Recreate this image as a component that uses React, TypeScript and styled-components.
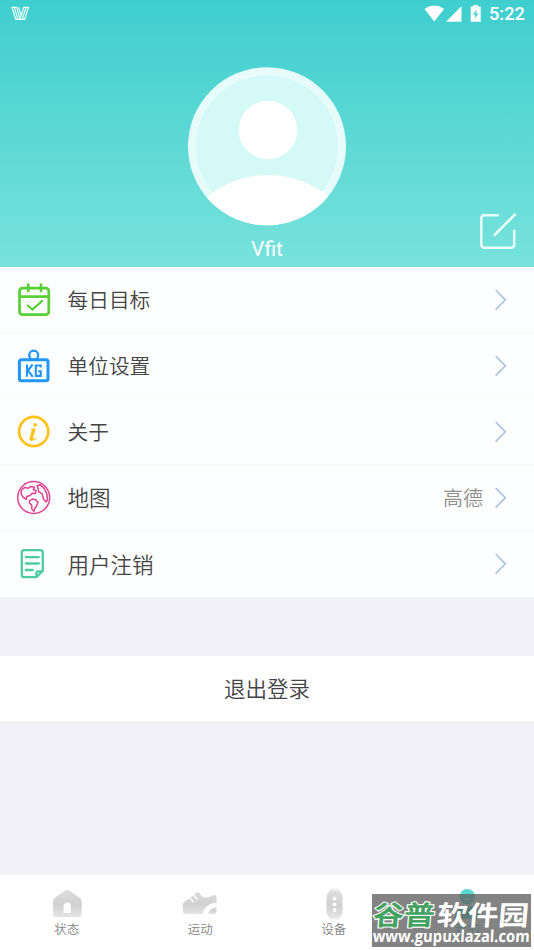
import React from "react";
import styled, { createGlobalStyle } from "styled-components";

const cjk = `"Noto Sans CJK SC", sans-serif`;

const GlobalStyle = createGlobalStyle`
  * { box-sizing: border-box; }
  body { margin: 0; background: #f2f1f8; font-family: ${cjk}; }
  svg { display: block; }
`;

const Screen = styled.main`
  position: relative;
  width: 534px;
  height: 950px;
  display: flex;
  flex-direction: column;
  overflow: hidden;
  background: #f2f1f8;
`;

const Header = styled.header`
  position: relative;
  height: 267px;
  flex: none;
  display: flex;
  flex-direction: column;
  align-items: center;
  background: linear-gradient(#3fcece, #78e2dc);
`;

const StatusBar = styled.div`
  width: 100%;
  height: 27px;
  flex: none;
  display: flex;
  align-items: center;
  justify-content: space-between;
  padding: 0 9px 0 11px;
`;

const StatusIcons = styled.div`
  display: flex;
  align-items: center;
`;

const Clock = styled.span`
  margin-left: 7px;
  width: 36px;
  font: 500 18.2px/27px Roboto, sans-serif;
  color: #fff;
`;

const Avatar = styled.svg`
  margin-top: 40px;
  flex: none;
`;

const UserName = styled.div`
  margin-top: 10px;
  font: 400 21px/27px Roboto, sans-serif;
  color: #fff;
`;

const EditButton = styled.button`
  position: absolute;
  right: 18px;
  top: 212px;
  padding: 0;
  border: 0;
  background: none;
`;

const Menu = styled.section`
  height: 330px;
  flex: none;
  display: flex;
  flex-direction: column;
  background: #fdfefe;
`;

const Row = styled.div`
  height: 66px;
  display: flex;
  align-items: center;
  padding: 0 27px 0 16px;
  border-bottom: 1px solid #f6f9fa;
  &:last-child { border-bottom: 0; }
`;

const RowLabel = styled.span<{ $size: number }>`
  flex: 1;
  margin: 0 0 1px 15.5px;
  font-size: ${(p) => p.$size}px;
  font-weight: 350;
  line-height: 30px;
  color: #444;
`;

const RowValue = styled.span`
  margin-right: 11px;
  font-size: 20px;
  font-weight: 350;
  line-height: 30px;
  color: #8f8f8f;
`;

const Logout = styled.button`
  margin: 59px 0 0;
  height: 65px;
  flex: none;
  padding: 0 0 2px;
  border: 0;
  background: #fff;
  font: 350 21.5px/63px ${cjk};
  color: #444;
`;

const NavBar = styled.nav`
  margin-top: auto;
  height: 75px;
  flex: none;
  display: grid;
  grid-template-columns: repeat(4, 1fr);
  background: #fff;
`;

const NavItem = styled.div<{ $active?: boolean }>`
  display: flex;
  flex-direction: column;
  align-items: center;
  padding-top: 13px;
  font-size: 12.5px;
  font-weight: 350;
  line-height: 18px;
  color: ${(p) => (p.$active ? "#46d0cf" : "#858585")};
  svg { margin-bottom: -2px; flex: none; }
`;

const Watermark = styled.svg`
  position: absolute;
  left: 372px;
  top: 894px;
`;

const CalendarIcon = () => (
  <svg width="36" height="36" viewBox="0 0 36 36" fill="none" stroke="#58d038" strokeWidth="2.7" strokeLinecap="round" strokeLinejoin="round">
    <rect x="3.5" y="6.2" width="29.3" height="26.5" rx="3" />
    <path d="M3.5 14.6H32.8M12.3 2.7V9M25 2.7V9" />
    <path d="M11.8 23.4l4.5 4.2 10-8.7" strokeWidth="2.1" />
  </svg>
);

const WeightIcon = () => (
  <svg width="36" height="36" viewBox="0 0 36 36" fill="none" stroke="#2196fb">
    <circle cx="17.7" cy="7.2" r="4.5" strokeWidth="2.3" />
    <rect x="3.4" y="11.7" width="28.6" height="21" rx="2" strokeWidth="3" />
    <path strokeWidth="2.1" d="M11 16.5v12.3M16.6 16.5 12 22.6l4.8 6.2M24.8 19.5v-2h-5v10.4h5v-4.6h-2.6" />
  </svg>
);

const InfoIcon = () => (
  <svg width="36" height="36" viewBox="0 0 36 36" fill="none">
    <circle cx="17.7" cy="17.5" r="14.6" stroke="#ffc21a" strokeWidth="2.7" />
    <circle cx="19.2" cy="10.8" r="1.9" fill="#ffc21a" />
    <path d="M14.4 14.4h5.4l-2.6 9.3c-.4 1.500.3 1.600 2.700 0l.5.8c-2.400 1.900-4.300 2.700-5.700 2.300-1.200-.3-1.400-1.500-.9-3.300l2.100-7.800-1.500-.5Z" fill="#ffc21a" />
  </svg>
);

const GlobeIcon = () => (
  <svg width="36" height="36" viewBox="0 0 36 36" fill="none" stroke="#de4291" strokeWidth="1.5" strokeLinejoin="round">
    <circle cx="17.7" cy="17.5" r="16" />
    <path d="M5.200 10.500 8.600 7.400l3.900.8 1.800-1.600 4.200.6-1.200 2.300 2.700 1-.6 3-3.200-.2-2.200 2.300-3.200.8-.5 2.900-3.500-2.300-1.600-3.400Z" />
    <path d="M21 6 23.800 4.700l4 3.200 3 5.700.7 5.800-1.200 2.600-2.700-2.800-1.300-5-3.700-2.500-.3-2.800Z" />
    <path d="m13.500 20.800 2.700-1.800 3.600.8 2.200 2.500-1.500 3.700-1.600 2.200-1 3-2-2-.2-4.100-2.200-2.200Z" />
  </svg>
);

const DocumentIcon = () => (
  <svg width="36" height="36" viewBox="0 0 36 36" fill="none" stroke="#4bcd9f" strokeWidth="2.3" strokeLinecap="round" strokeLinejoin="round">
    <path d="M8.3 4.1h16q2.5 0 2.5 2.5v18.2l-6.3 6.4H8.3q-2.5 0-2.5-2.5V6.6q0-2.5 2.5-2.5ZM26.7 25.3h-4.500q-1.800 0-1.800 1.800v3.600" />
    <path d="M9.8 11.1h13M9.8 17.5h13M9.8 24h7" />
  </svg>
);

const Chevron = () => (
  <svg width="13" height="22" viewBox="0 0 13 22" fill="none" stroke="#abc5e3" strokeWidth="1.7">
    <path d="m1.6 1 9.7 9.8-9.700 9.800" />
  </svg>
);

const menuItems = [
  { label: "每日目标", size: 20.7, Icon: CalendarIcon },
  { label: "单位设置", size: 20.7, Icon: WeightIcon },
  { label: "关于", size: 20.7, Icon: InfoIcon },
  { label: "地图", size: 21.5, Icon: GlobeIcon, value: "高德" },
  { label: "用户注销", size: 21.5, Icon: DocumentIcon },
];

const HomeIcon = () => (
  <svg width="36" height="34" viewBox="0 0 36 34">
    <path fill="url(#navFill)" fillRule="evenodd" d="M16.2 2.7q2.1-1.6 4.2 0l10 6.8q2.3 1.7 2.3 4v13.2q0 2.2-2.2 2.2H6.2Q4 28.9 4 26.7V13.5q0-2.3 2.3-4ZM14.6 25h7.4v-6.7a3.700 3.700 0 0 0-7.4 0Z" />
  </svg>
);

const ShoeIcon = () => (
  <svg width="36" height="34" viewBox="0 0 36 34">
    <path fill="url(#navFill)" d="M.8 16.5Q.8 15 2.2 14L8.500 9.600 14.8 4.500Q16.200 3.500 17.400 5L19.500 8q2.500 2.200 6.500 1.300 3-.5 5-2.300 3.500-.5 3.500 2v5.700C27 14.700 22.300 19 20.500 26H4Q.8 26 .8 23Z" />
    <path fill="url(#navFill)" d="M26.200 26c.8-3.500 3.800-6.500 8.300-6.800V23q0 3-3 3Z" />
    <path d="m7.700 9.700 4 4.500M11.500 7l4 4.500" stroke="#fff" strokeWidth="1.500" />
  </svg>
);

const WatchIcon = () => (
  <svg width="36" height="34" viewBox="0 0 36 34">
    <path fill="#ececec" d="M13.5.8h10l1.500 5H12ZM12 26h13l-1.500 5.500h-10Z" />
    <path fill="url(#navFill)" d="M14 3.500h9q3.600 2 3.600 6.500v13q0 4.500-3.600 6.500h-9q-3.600-2-3.600-6.500V10q0-4.500 3.600-6.500Z" />
    <g fill="#fff"><circle cx="18.5" cy="10.5" r="1.9" /><circle cx="18.5" cy="16.3" r="1.9" /><circle cx="18.5" cy="22" r="1.9" /></g>
  </svg>
);

const ProfileIcon = () => (
  <svg width="36" height="34" viewBox="0 0 36 34" fill="#55d9d1">
    <circle cx="18.3" cy="8.6" r="7.6" />
    <path d="M6 31v-3q0-10 12-10t12 10v3Z" />
    <path d="M14.5 10q3.7 4 7.4 0" fill="none" stroke="#fff" />
  </svg>
);

export default function App() {
  return (
    <Screen>
      <GlobalStyle />
      <svg width="0" height="0">
        <defs>
          <linearGradient id="navFill" x1="0" y1="0" x2="0" y2="1">
            <stop stopColor="#dcdcdc" />
            <stop offset=".55" stopColor="#d1d1d1" />
            <stop offset="1" stopColor="#e4e4e4" />
          </linearGradient>
        </defs>
      </svg>
      <Header>
        <StatusBar>
          <svg width="18" height="15" viewBox="0 0 18 15" fill="none" stroke="#effffc" strokeWidth="1.2">
            <path d="M1 1.300h4.700l3.300 12H4.700ZM3.300 1.300l3.600 12M7.500 1.300l2.700 8.400M17.400 1.300l-3.700 12H9l3.700-12ZM15 1.300l-3.700 12" />
          </svg>
          <StatusIcons>
            <svg width="58" height="18" viewBox="0 0 58 18" fill="#fff">
              <path d="M.5 4q9.800-6.800 19.600 0L10.300 16.500Z" />
              <path d="M37.500 1.200v15.600H22Z" />
              <path fillRule="evenodd" d="M46.700 1.600h2.500V0H54v1.600h2.700v15.200h-10ZM52.700 4.500l-3.700 5h2.300l-.5 4.300 3.600-5.200h-2.300Z" />
            </svg>
            <Clock>5:22</Clock>
          </StatusIcons>
        </StatusBar>
        <Avatar width="158" height="159" viewBox="0 0 158 159">
          <defs><clipPath id="avatarClip"><circle cx="79" cy="79.3" r="79" /></clipPath></defs>
          <circle cx="79" cy="79.3" r="79" fill="#e6fbfa" />
          <circle cx="79" cy="79.3" r="71" fill="#d5f9f6" />
          <circle cx="80" cy="63" r="29.3" fill="#fff" />
          <circle cx="80" cy="204" r="96" fill="#fff" clipPath="url(#avatarClip)" />
        </Avatar>
        <UserName>Vfit</UserName>
        <EditButton aria-label="edit">
          <svg width="38" height="38" viewBox="0 0 38 38" fill="none" stroke="#e8fdfa" strokeWidth="2.5" strokeLinecap="round" strokeLinejoin="round">
            <path d="M20 3.300H6.500Q3.300 3.300 3.300 6.500v26q0 3.200 3.200 3.200h26.500q3.200 0 3.200-3.200V18.500M16.500 23 37 2.500" />
          </svg>
        </EditButton>
      </Header>
      <Menu>
        {menuItems.map(({ label, size, Icon, value }) => (
          <Row key={label}>
            <Icon />
            <RowLabel $size={size}>{label}</RowLabel>
            {value && <RowValue>{value}</RowValue>}
            <Chevron />
          </Row>
        ))}
      </Menu>
      <Logout>退出登录</Logout>
      <NavBar>
        <NavItem><HomeIcon />状态</NavItem>
        <NavItem><ShoeIcon />运动</NavItem>
        <NavItem><WatchIcon />设备</NavItem>
        <NavItem $active><ProfileIcon />我的</NavItem>
      </NavBar>
      <Watermark width="159" height="53" viewBox="0 0 159 53">
        <rect width="159" height="53" fill="#606060" fillOpacity=".78" />
        <g transform="skewX(-5)" fontFamily="Noto Sans CJK SC, sans-serif" fontWeight="700" fontSize="27" strokeLinejoin="round">
          <text x="3" y="31.500" textLength="62" lengthAdjust="spacingAndGlyphs" fill="#43a260" stroke="#fff" strokeWidth="2.2" paintOrder="stroke">谷普</text>
          <text x="67" y="31.500" textLength="92" lengthAdjust="spacingAndGlyphs" fill="#fff">软件园</text>
        </g>
        <g transform="skewX(-3)">
          <text x="3" y="48" textLength="157" lengthAdjust="spacingAndGlyphs" fill="#fff" fontFamily="Open Sans, sans-serif" fontWeight="700" fontSize="16.5">www.gupuxlazal.com</text>
        </g>
      </Watermark>
    </Screen>
  );
}
